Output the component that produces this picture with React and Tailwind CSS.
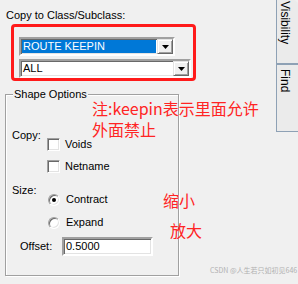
import React from "react";

const ui = { fontFamily: '"Liberation Sans", Arial, sans-serif' };
const cjk = { fontFamily: '"Noto Sans CJK SC", "Noto Sans", sans-serif' };

function Arrow() {
  return (
    <svg width="7" height="4" viewBox="0 0 7 4" className="block">
      <polygon points="0,0 7,0 3.5,4" fill="#000" />
    </svg>
  );
}

function DropButton() {
  return (
    <div className="flex h-full w-[16px] items-center justify-center border border-t-[#e3e3e3] border-l-[#e3e3e3] border-b-[#696969] border-r-[#696969] bg-[#f0f0f0] shadow-[inset_1px_1px_0_#fff,inset_-1px_-1px_0_#a0a0a0]">
      <Arrow />
    </div>
  );
}

function Combo({ width, text, selected }) {
  return (
    <div
      className={`flex h-[19px] border-2 border-t-[#a0a0a0] border-l-[#a0a0a0] border-b-white border-r-white bg-white shadow-[inset_1px_1px_0_#696969,inset_-1px_-1px_0_#e3e3e3] ${width}`}
    >
      <div className="flex flex-1 items-stretch p-[1px]">
        <div
          className={`flex flex-1 items-center pl-[1px] text-[11px] leading-[13px] ${
            selected ? "bg-[#0078d7] text-white" : "text-black"
          }`}
        >
          {text}
        </div>
      </div>
      <DropButton />
    </div>
  );
}

function Check({ label }) {
  return (
    <div className="flex items-center gap-[5px]">
      <div className="h-[13px] w-[13px] border border-t-[#a0a0a0] border-l-[#a0a0a0] border-b-white border-r-white bg-white shadow-[inset_1px_1px_0_#696969,inset_-1px_-1px_0_#e3e3e3]" />
      <span className="text-[11px] leading-[13px]">{label}</span>
    </div>
  );
}

function Radio({ label, checked }) {
  return (
    <div className="flex items-center gap-[6px]">
      <div className="flex h-[12px] w-[12px] items-center justify-center rounded-full border border-t-[#a0a0a0] border-l-[#a0a0a0] border-b-white border-r-white bg-white shadow-[inset_1px_1px_0_#696969,inset_-1px_-1px_0_#e3e3e3]">
        {checked && <div className="h-[4px] w-[4px] rounded-full bg-black" />}
      </div>
      <span className="text-[11px] leading-[13px]">{label}</span>
    </div>
  );
}

export default function App() {
  return (
    <div
      className="relative flex h-[284px] w-[298px] overflow-hidden bg-[#f0f0f0] text-black"
      style={ui}
    >
      {/* main column */}
      <div className="flex w-[276px] flex-col">
        <div className="pl-[6px] pt-[9px] text-[11px] leading-[13px]">
          Copy to Class/Subclass:
        </div>
        <div className="ml-[11px] mt-[2px] flex h-[57px] w-[185px] flex-col gap-[3px] rounded-[4px] border-[3px] border-[#ff1a1a] pl-[5px] pt-[10px]">
          <Combo width="w-[156px]" text="ROUTE KEEPIN" selected />
          <Combo width="w-[172px]" text="ALL" />
        </div>

        {/* group box */}
        <div className="relative ml-[5px] mt-[13px] h-[182px] w-[174px] border border-[#a0a0a0] shadow-[1px_1px_0_#fff,inset_1px_1px_0_#fff]">
          <span className="absolute left-[7px] top-[-7px] bg-[#f0f0f0] px-[1px] text-[11px] leading-[13px]">
            Shape Options
          </span>
          <div className="flex flex-col pl-[6px] pt-[34px]">
            <div className="flex items-start">
              <div className="w-[35px] text-[11px] leading-[13px]">Copy:</div>
              <div className="flex flex-col gap-[9px] pt-[9px]">
                <Check label="Voids" />
                <Check label="Netname" />
              </div>
            </div>
            <div className="mt-[11px] flex items-start">
              <div className="w-[36px] text-[11px] leading-[13px]">Size:</div>
              <div className="flex flex-col gap-[10px] pt-[9px]">
                <Radio label="Contract" checked />
                <Radio label="Expand" />
              </div>
            </div>
            <div className="mt-[8px] flex items-center pl-[8px]">
              <div className="w-[42px] text-[11px] leading-[13px]">Offset:</div>
              <div className="flex h-[19px] w-[91px] items-center border-2 border-t-[#a0a0a0] border-l-[#a0a0a0] border-b-white border-r-white bg-white pl-[2px] text-[11px] leading-[13px] shadow-[inset_1px_1px_0_#696969,inset_-1px_-1px_0_#e3e3e3]">
                0.5000
              </div>
            </div>
          </div>
        </div>
      </div>

      {/* side tabs */}
      <div className="flex w-[22px] flex-col">
        <div className="flex h-[63px] items-start rounded-tr-[5px] border-l border-[#8ea1b5] bg-[#ebebeb] pl-[1px] pt-[1px]">
          <span className="text-[12px] leading-[14px] [writing-mode:vertical-rl]">
            Visibility
          </span>
        </div>
        <div className="h-[2px] bg-[#8ea1b5]" />
        <div className="flex h-[67px] items-start border-b border-l border-[#8ea1b5] bg-[#ebebeb] pl-[1px] pt-[4px]">
          <span className="text-[12px] leading-[14px] [writing-mode:vertical-rl]">
            Find
          </span>
        </div>
      </div>

      {/* red annotations drawn over the dialog */}
      <div
        className="absolute left-[92px] top-[98px] text-[16px] leading-[21px] text-[#ff2424]"
        style={cjk}
      >
        注:keepin表示里面允许
        <br />
        外面禁止
      </div>
      <div
        className="absolute left-[163px] top-[190px] text-[16px] leading-[21px] text-[#ff2424]"
        style={cjk}
      >
        缩小
      </div>
      <div
        className="absolute left-[170px] top-[220px] text-[16px] leading-[21px] text-[#ff2424]"
        style={cjk}
      >
        放大
      </div>
      <div
        className="absolute left-[210px] top-[265px] text-[7px] leading-[10px] text-[#b0b0b0]"
        style={cjk}
      >
        CSDN @人生若只如初见646
      </div>
    </div>
  );
}
